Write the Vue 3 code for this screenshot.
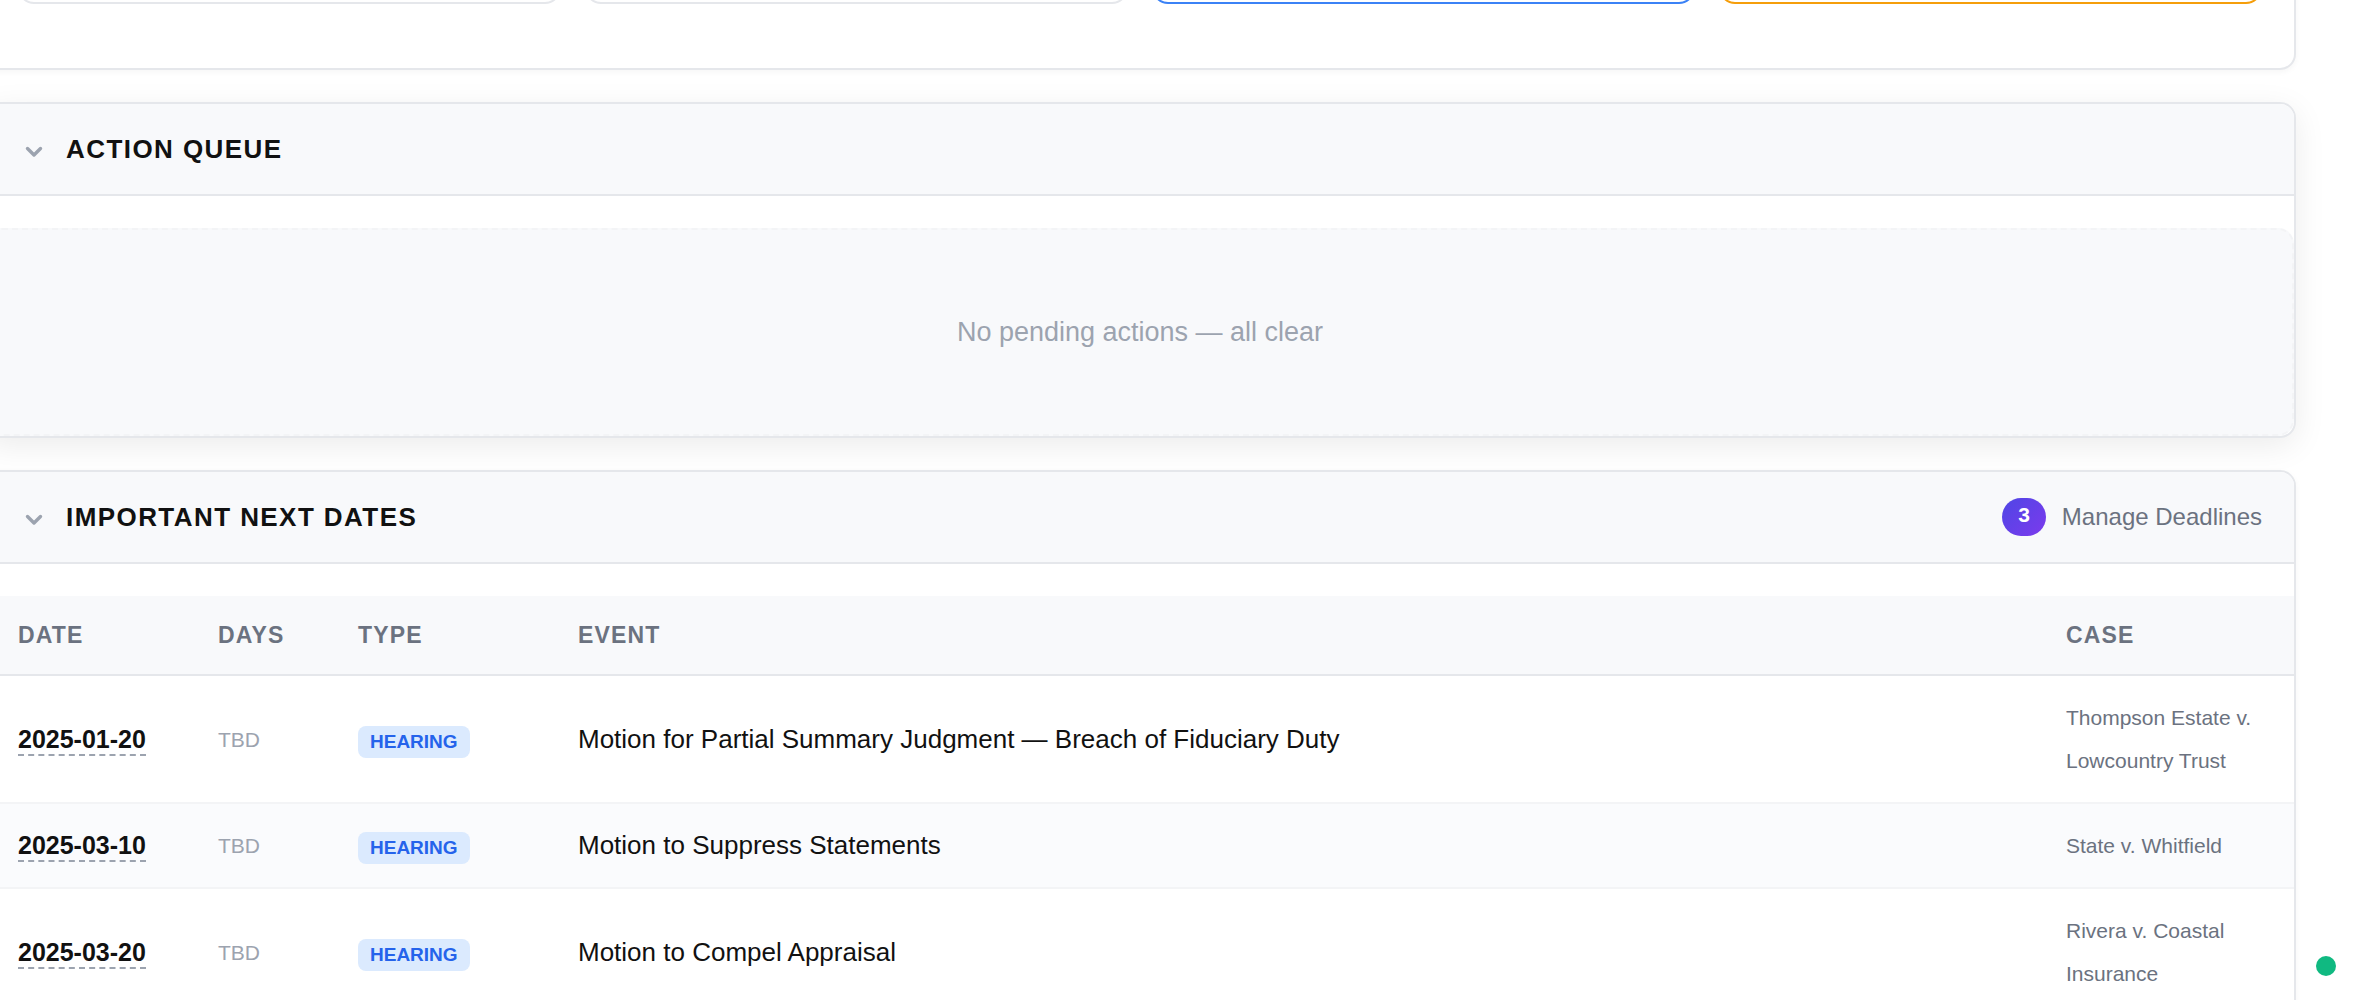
<script setup>
import { ref } from 'vue';

const stats = ['', '', 'info', 'warn'];

const queueOpen = ref(true);
const datesOpen = ref(true);

const deadlines = [
  { date: '2025-01-20', days: 'TBD', type: 'HEARING', event: 'Motion for Partial Summary Judgment — Breach of Fiduciary Duty', matter: 'Thompson Estate v. Lowcountry Trust' },
  { date: '2025-03-10', days: 'TBD', type: 'HEARING', event: 'Motion to Suppress Statements', matter: 'State v. Whitfield' },
  { date: '2025-03-20', days: 'TBD', type: 'HEARING', event: 'Motion to Compel Appraisal', matter: 'Rivera v. Coastal Insurance' }
];
</script>

<template>
  <main class="dashboard">
    <section class="panel">
      <div class="stats">
        <div v-for="(kind, i) in stats" :key="i" class="stat" :class="kind"></div>
      </div>
    </section>

    <section class="panel raised">
      <header class="panel_header">
        <button class="toggle" type="button" :aria-expanded="queueOpen" @click="queueOpen = !queueOpen">
          <svg class="chevron" :class="{ closed: !queueOpen }" viewBox="0 0 32 32" aria-hidden="true">
            <path d="M9.5 15.5L16 22l6.5-6.5" />
          </svg>
          <h2>ACTION QUEUE</h2>
        </button>
      </header>
      <div v-if="queueOpen" class="panel_body">
        <div class="empty">No pending actions — all clear</div>
      </div>
    </section>

    <section class="panel">
      <header class="panel_header">
        <button class="toggle" type="button" :aria-expanded="datesOpen" @click="datesOpen = !datesOpen">
          <svg class="chevron" :class="{ closed: !datesOpen }" viewBox="0 0 32 32" aria-hidden="true">
            <path d="M9.5 15.5L16 22l6.5-6.5" />
          </svg>
          <h2>IMPORTANT NEXT DATES</h2>
        </button>
        <div class="actions">
          <span class="count">{{ deadlines.length }}</span>
          <a href="#deadlines">Manage Deadlines</a>
        </div>
      </header>
      <div v-if="datesOpen" class="panel_body">
        <table id="deadlines">
          <colgroup>
            <col class="col_date">
            <col class="col_days">
            <col class="col_type">
            <col>
            <col class="col_case">
          </colgroup>
          <thead>
            <tr>
              <th scope="col">DATE</th>
              <th scope="col">DAYS</th>
              <th scope="col">TYPE</th>
              <th scope="col">EVENT</th>
              <th scope="col">CASE</th>
            </tr>
          </thead>
          <tbody>
            <tr v-for="row in deadlines" :key="row.date">
              <td><span class="date">{{ row.date }}</span></td>
              <td class="days">{{ row.days }}</td>
              <td><span class="tag">{{ row.type }}</span></td>
              <td>{{ row.event }}</td>
              <td class="case">{{ row.matter }}</td>
            </tr>
          </tbody>
        </table>
      </div>
    </section>

    <span class="status"></span>
  </main>
</template>

<style>
html {
  scrollbar-width: none;
}

body {
  background: #fff;
  overflow-x: hidden;
}
</style>

<style scoped>
.dashboard {
  display: flex;
  flex-direction: column;
  gap: 32px;
  margin: -94px 64px 0 -16px;
  font-family: "Liberation Sans", Arial, sans-serif;
  font-size: 26px;
  color: #111;
}

.panel {
  background: #fff;
  border: 2px solid #e5e7eb;
  border-radius: 16px;
  overflow: hidden;
  box-shadow: 0 2px 6px rgba(0, 0, 0, 0.04);
}

.raised {
  box-shadow: 0 8px 32px rgba(0, 0, 0, 0.08);
}

.stats {
  display: grid;
  grid-template-columns: repeat(4, 1fr);
  gap: 24px;
  padding: 32px 32px 64px;
}

.stat {
  height: 60px;
  border: 2px solid #e5e7eb;
  border-radius: 16px;
}

.stat.info {
  border-color: #3b82f6;
}

.stat.warn {
  border-color: #f59e0b;
}

.panel_header {
  display: flex;
  align-items: center;
  justify-content: space-between;
  padding: 24px 32px;
  background: #f8f9fb;
  border-bottom: 2px solid #e5e7eb;
}

.toggle {
  display: flex;
  align-items: center;
  gap: 16px;
  padding: 0;
  border: 0;
  background: none;
  color: inherit;
  font: inherit;
  cursor: pointer;
}

.chevron {
  width: 32px;
  height: 32px;
  fill: none;
  stroke: #9ca3af;
  stroke-width: 3.4;
  stroke-linecap: round;
  stroke-linejoin: round;
}

.chevron.closed {
  transform: rotate(-90deg);
}

h2 {
  margin: 0;
  font-size: 26px;
  line-height: 42px;
  letter-spacing: 0.055em;
}

.actions {
  display: flex;
  align-items: center;
  gap: 16px;
}

.actions a {
  color: #6b7280;
  font-size: 24px;
  line-height: 38px;
  text-decoration: none;
}

.count {
  padding: 4px 16px 8px;
  border-radius: 20px;
  background: linear-gradient(135deg, #4f46e5, #7c3aed);
  color: #fff;
  font-size: 21px;
  font-weight: 700;
  line-height: 26px;
}

.panel_body {
  padding-top: 32px;
}

.empty {
  padding: 80px 32px;
  border: 2px dashed #f3f4f6;
  border-radius: 16px;
  background: #f8f9fb;
  color: #9ca3af;
  font-size: 27px;
  line-height: 44px;
  text-align: center;
}

table {
  width: 100%;
  table-layout: fixed;
  border-collapse: separate;
  border-spacing: 0;
}

.col_date {
  width: 200px;
}

.col_days {
  width: 140px;
}

.col_type {
  width: 220px;
}

.col_case {
  width: 260px;
}

th {
  padding: 20px 32px;
  background: #f8f9fb;
  border-bottom: 2px solid #e5e7eb;
  color: #6b7280;
  font-size: 23px;
  line-height: 38px;
  letter-spacing: 0.05em;
  text-align: left;
}

td {
  padding: 20px 32px;
  border-bottom: 2px solid #f3f4f6;
  line-height: 43px;
  vertical-align: middle;
}

tbody tr:nth-child(even) {
  background: #fafbfd;
}

.date {
  display: inline-block;
  border-bottom: 2px dashed #9ca3af;
  font-size: 25px;
  font-weight: 700;
  line-height: 30px;
}

.days {
  color: #9ca3af;
  font-size: 21px;
}

.tag {
  display: inline-block;
  padding: 4px 12px;
  border-radius: 8px;
  background: #dbeafe;
  color: #2563eb;
  font-size: 19px;
  font-weight: 700;
  line-height: 24px;
}

.case {
  color: #6b7280;
  font-size: 21px;
}

.status {
  position: fixed;
  right: 24px;
  bottom: 24px;
  width: 20px;
  height: 20px;
  border-radius: 50%;
  background: #10b981;
}
</style>
